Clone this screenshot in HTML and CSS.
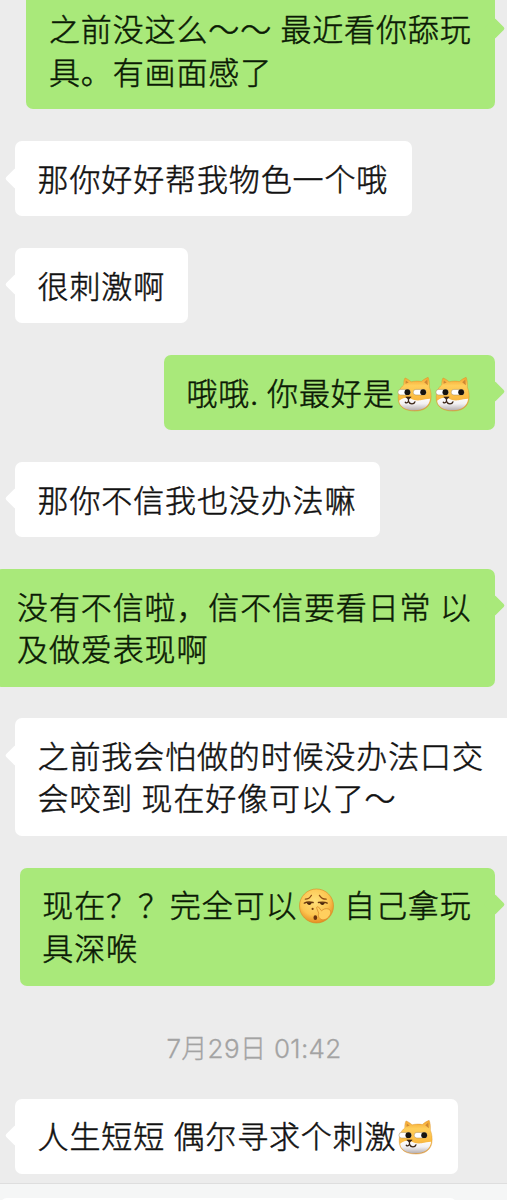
FILE: index.html
```html
<!DOCTYPE html>
<html lang="zh-CN">
<head>
    <meta charset="UTF-8">
    <meta name="viewport" content="width=device-width, initial-scale=1.0">
    <title>聊天</title>
    <link rel="stylesheet" href="styles.css">
</head>
<body>
<svg class="defs" width="0" height="0">
    <defs>
        <linearGradient id="fur" x1="0" y1="0" x2="0" y2="1">
            <stop offset="0" stop-color="#f3a12c"/>
            <stop offset="0.25" stop-color="#ffcf5c"/>
            <stop offset="0.6" stop-color="#fcbc42"/>
            <stop offset="1" stop-color="#d99a48"/>
        </linearGradient>
        <linearGradient id="muzzle" x1="0" y1="0" x2="0" y2="1">
            <stop offset="0" stop-color="#fff"/>
            <stop offset="0.5" stop-color="#f2f0f2"/>
            <stop offset="1" stop-color="#b5aeb0"/>
        </linearGradient>
        <radialGradient id="skin" cx="0.45" cy="0.35" r="0.65">
            <stop offset="0" stop-color="#ffe07a"/>
            <stop offset="0.65" stop-color="#fcc550"/>
            <stop offset="1" stop-color="#e58e22"/>
        </radialGradient>
        <symbol id="doge" viewBox="0 0 36 36">
            <path d="M2 16 C3 12 5.500 10 7 8.500 C6.800 5 7.500 3 8.200 1.500 C10 2 12.500 3.500 14.500 5.500 C18 4.500 22 4.500 25 5.200 C27.500 3 30 1.500 32 .8 C33.200 3.500 33.500 7 33.300 11 C35 15 35.500 20 34.800 24 C33.500 32 27 35.500 18.500 35.500 C9 35.500 2.500 32 1.500 25 C1 22 1.200 19 2 16Z" fill="url(#fur)" stroke="#d88d24" stroke-width=".4"/>
            <path d="M8.700 7.500 L9 4 L12 6.200Z M28 6 L31.200 3.200 L31.700 9Z" fill="#cf8833"/>
            <path d="M2.200 25 C5 22 8 22 12 21.500 C16 24 19 25 24 24.500 C28 24 31 23 34 23 C33.500 30.500 27 34.800 18.500 34.800 C9.500 34.800 2.800 31.500 2.200 25Z" fill="url(#muzzle)"/>
            <rect x="1" y="13.300" width="12.800" height="5.700" rx="2.700" fill="#fff" stroke="#a88a58" stroke-width=".5"/>
            <rect x="16.700" y="13.300" width="13.300" height="5.700" rx="2.700" fill="#fff" stroke="#a88a58" stroke-width=".5"/>
            <circle cx="10.700" cy="16.100" r="3" fill="#16130f"/>
            <circle cx="26.900" cy="16.100" r="3" fill="#16130f"/>
            <path d="M9 21 H14.600 L11.800 23.800Z" fill="#3a2415" stroke="#3a2415" stroke-width=".6" stroke-linejoin="round"/>
            <path d="M11.800 23 V25.500 C11 27.500 9.300 27.500 8.500 26.500 M11.800 25.500 C13 29 17.500 29 18.500 26" fill="none" stroke="#3a2415" stroke-width="1.300" stroke-linecap="round"/>
        </symbol>
        <symbol id="shush" viewBox="0 0 36 36">
            <circle cx="18" cy="18" r="17.500" fill="url(#skin)" stroke="#d98723" stroke-width=".6"/>
            <path d="M6.500 11 C9 11 11.500 9.500 12.800 7 M21 7 C22.500 9.500 25 11 28 11" fill="none" stroke="#8f4d14" stroke-width="1.300" stroke-linecap="round"/>
            <path d="M5.500 15 C8 13.700 12 13.900 14.500 14.400 M20 14.400 C23 13.900 26.500 13.700 29 15" fill="none" stroke="#6b390f" stroke-width="1.500" stroke-linecap="round"/>
            <path d="M8 14.400 H13 C13 17.800 8.300 17.800 8 14.400Z M21.500 14.400 H26.500 C26.500 17.800 21.700 17.800 21.500 14.400Z" fill="#4a260c"/>
            <circle cx="14" cy="21" r="1.100" fill="#7c430f"/>
            <ellipse cx="16.800" cy="30" rx="1.900" ry="2.400" fill="#6b350d"/>
            <path d="M18.300 20.500 C17.500 18.700 19.600 18.200 20.500 19.600 L23.200 23 C25 21 27.500 20.300 30 21 C33 22 33.300 25 31.500 28 C29 32 24.500 33.500 21.500 31 C19.500 29.500 19.800 26.500 20.300 25.500Z" fill="#ffcf5e" stroke="#d98a2a" stroke-width=".8"/>
        </symbol>
    </defs>
</svg>

<main class="chat">
    <div class="message sent"><div class="bubble">之前没这么～～ 最近看你舔玩<br>具。有画面感了</div></div>
    <div class="message received"><div class="bubble">那你好好帮我物色一个哦</div></div>
    <div class="message received"><div class="bubble">很刺激啊</div></div>
    <div class="message sent"><div class="bubble">哦哦. 你最好是<svg class="emoji"><use href="#doge"/></svg><svg class="emoji"><use href="#doge"/></svg></div></div>
    <div class="message received"><div class="bubble">那你不信我也没办法嘛</div></div>
    <div class="message sent"><div class="bubble">没有不信啦，信不信要看日常 以<br>及做爱表现啊</div></div>
    <div class="message received"><div class="bubble wide">之前我会怕做的时候没办法口交<br>会咬到 现在好像可以了～</div></div>
    <div class="message sent"><div class="bubble">现在？？完全可以<svg class="emoji"><use href="#shush"/></svg> 自己拿玩<br>具深喉</div></div>
    <div class="time">7月29日 01:42</div>
    <div class="message received"><div class="bubble">人生短短 偶尔寻求个刺激<svg class="emoji"><use href="#doge"/></svg></div></div>
</main>
<footer class="input-bar"><div class="input-field"></div></footer>
</body>
</html>
```

FILE: styles.css
```css
body {
    margin: 0;
    height: 1200px;
    display: flex;
    flex-direction: column;
    overflow: hidden;
    background-color: #ececec;
    color: #111;
    font-family: "Noto Sans CJK SC", sans-serif;
}
.defs {
    position: absolute;
}
.chat {
    display: flex;
    flex-direction: column;
    gap: 31.6px;
    margin-top: -8.4px;
    height: 1191.6px;
    flex-shrink: 0;
}
.message {
    display: flex;
    padding: 0 12px 0 15px;
}
.sent {
    justify-content: flex-end;
}
.bubble {
    position: relative;
    flex-shrink: 0;
    padding: 15.6px 23.4px 17.4px 22.6px;
    border-radius: 7px;
    background-color: #fff;
    font-size: 31px;
    font-weight: 300;
    line-height: 42.4px;
    letter-spacing: 0.87px;
    word-spacing: 0.6px;
    white-space: nowrap;
    -webkit-text-stroke: 0.5px currentColor;
}
.bubble.wide {
    padding-right: 34px;
}
.sent .bubble {
    background-color: #a9e97a;
    color: #0b1a05;
}
/* bubble tail */
.bubble::before {
    content: "";
    position: absolute;
    top: 29.5px;
    left: -7px;
    width: 15px;
    height: 15px;
    border-radius: 2px;
    background-color: inherit;
    transform: rotate(45deg);
}
.sent .bubble::before {
    left: auto;
    right: -7px;
}
.emoji {
    width: 35px;
    height: 36px;
    margin: 0 1.5px 0 2px;
    vertical-align: -7px;
}
.time {
    height: 50px;
    margin: 7px 0 -7.2px 1px;
    line-height: 50px;
    text-align: center;
    font-family: Inter, "Noto Sans CJK SC", sans-serif;
    font-size: 26px;
    font-weight: 300;
    letter-spacing: 0.35px;
    color: #a3a3a3;
    -webkit-text-stroke: 0.3px currentColor;
}
.input-bar {
    flex: 1;
    border-top: 1px solid #dedede;
    background-color: #f5f6f6;
}
.input-field {
    width: 457px;
    height: 40px;
    margin-top: 14px;
    border-radius: 7px;
    background-color: #fff;
}
```
